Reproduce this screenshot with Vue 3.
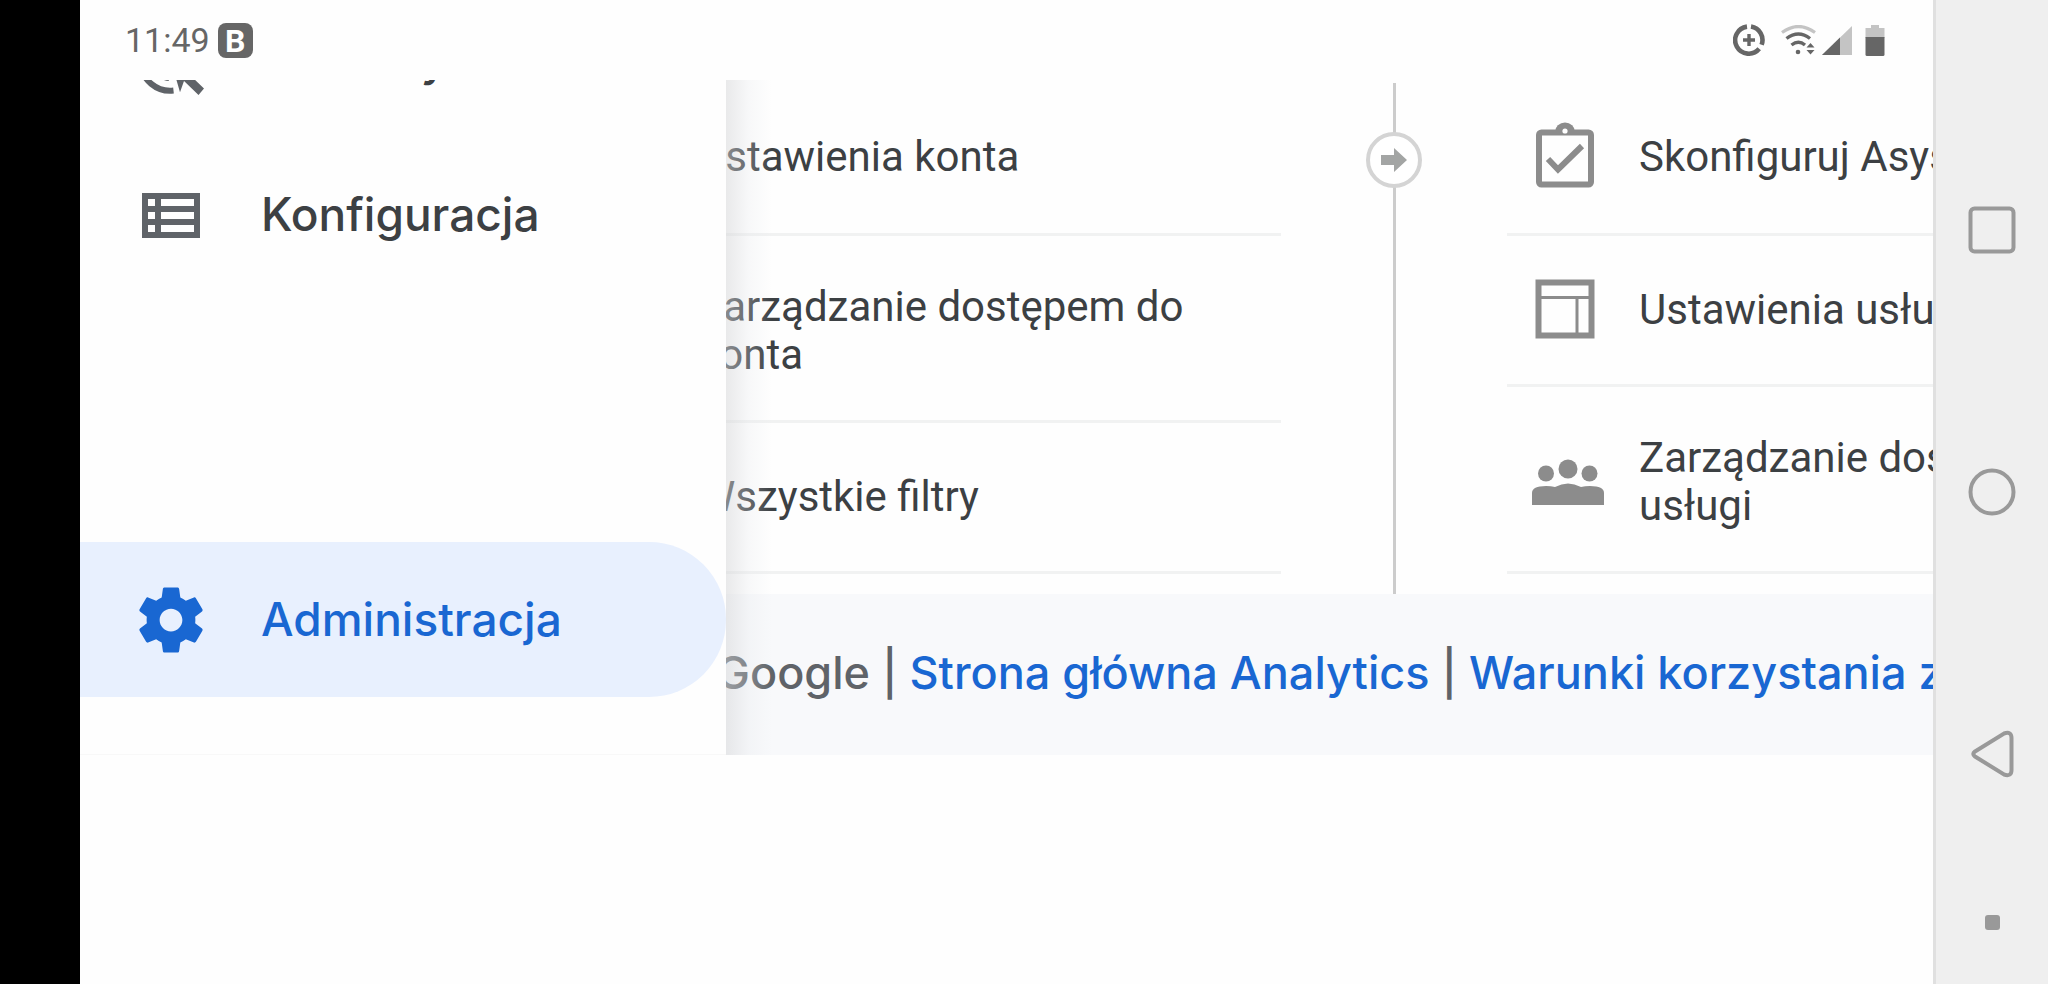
<script setup>
const drawerItems = [
  { id: 'ads', label: 'Reklamy' },
  { id: 'config', label: 'Konfiguracja' },
  { id: 'admin', label: 'Administracja', active: true }
];

const accountItems = [
  { id: 'account', label: 'Ustawienia konta' },
  { id: 'access', label: 'Zarządzanie dostępem do konta', tall: true },
  { id: 'filters', label: 'Wszystkie filtry' }
];

const propertyItems = [
  { id: 'assistant', label: 'Skonfiguruj Asystenta' },
  { id: 'settings', label: 'Ustawienia usługi' },
  { id: 'users', label: 'Zarządzanie dostępem do usługi', tall: true }
];
</script>

<template>
  <div class="device">
    <div class="cutout"></div>

    <div class="screen">
      <header class="status-bar">
        <div class="status-left">
          <span class="time">11:49</span>
          <span class="app-badge">B</span>
        </div>
        <div class="status-right">
          <svg class="saver" width="32" height="32" viewBox="0 0 32 32">
            <path d="M18 2.6A13.6 13.6 0 0 1 28.6 20.8M26.2 24.8A13.6 13.6 0 1 1 14 2.6" fill="none" stroke="#666" stroke-width="4.6" />
            <path d="M16 10v12M10 16h12" stroke="#666" stroke-width="3.4" />
          </svg>
          <svg class="wifi" width="35" height="30" viewBox="0 0 35 30">
            <path d="M1 7.5Q17.5-4.5 34 7.5" fill="none" stroke="#c4c4c4" stroke-width="3.2" />
            <path d="M5.5 13.5Q17.5 4.5 29 13.5M10.5 20Q17.5 14.5 24 20" fill="none" stroke="#666" stroke-width="3.4" />
            <circle cx="17" cy="27" r="2.3" fill="#666" />
            <path d="M25.5 22.5l4-4.5 4 4.5zM25.5 25h8l-4 4.5z" fill="#666" />
          </svg>
          <svg class="signal" width="30" height="29" viewBox="0 0 30 29">
            <path d="M30 0v29H0z" fill="#c4c4c4" />
            <path d="M18 11.5V29H0z" fill="#666" />
          </svg>
          <svg class="battery" width="20" height="31" viewBox="0 0 20 31">
            <path d="M6 0h8v3h5.5v10H.5V3H6z" fill="#c4c4c4" />
            <path d="M.5 12h19v17.5q0 1.5-1.5 1.5H2q-1.5 0-1.5-1.5z" fill="#666" />
          </svg>
        </div>
      </header>

      <main class="page">
        <div class="columns">
          <ul class="list account-list">
            <li v-for="item in accountItems" :key="item.id" class="item" :class="{ tall: item.tall }">
              <span class="label">{{ item.label }}</span>
            </li>
          </ul>

          <div class="divider">
            <button class="move-btn" aria-label="Przenieś">
              <svg width="28" height="26" viewBox="0 0 28 26">
                <path d="M1 8h13V1l13 12-13 12v-7H1z" fill="#a3a5a4" />
              </svg>
            </button>
          </div>

          <ul class="list property-list">
            <li v-for="item in propertyItems" :key="item.id" class="item" :class="{ tall: item.tall }">
              <svg v-if="item.id === 'assistant'" class="item-icon" width="80" height="80" viewBox="0 -2 80 80">
                <rect x="13" y="13.5" width="52" height="52" rx="2.5" fill="none" stroke="#8c8c8c" stroke-width="6" />
                <path d="M29 13a10 9.5 0 0 1 20 0z" fill="#8c8c8c" />
                <circle cx="39" cy="12" r="2.6" fill="#fff" />
                <path d="M22 40l10 10.5L56 27" fill="none" stroke="#8c8c8c" stroke-width="6" />
              </svg>
              <svg v-else-if="item.id === 'settings'" class="item-icon" width="80" height="80" viewBox="0 -2 80 80">
                <path d="M12.5 10.5h53v53h-53z" fill="none" stroke="#8c8c8c" stroke-width="6" />
                <path d="M15 25.5h48M51 25.5V61" fill="none" stroke="#8c8c8c" stroke-width="3" />
              </svg>
              <svg v-else class="item-icon" width="80" height="80" viewBox="0 -2 80 80">
                <circle cx="42" cy="25" r="9.5" fill="#8c8c8c" />
                <circle cx="20" cy="29.5" r="8" fill="#8c8c8c" />
                <circle cx="63.5" cy="29.5" r="8" fill="#8c8c8c" />
                <path d="M6 61V49q0-7 14-7 5 0 9 1 13-7 26 0 4-1 9-1 14 0 14 7v12z" fill="#8c8c8c" />
              </svg>
              <span class="label">{{ item.label }}</span>
            </li>
          </ul>
        </div>

        <footer class="footer">
          <span>© 2021 Google</span> | <a href="#">Strona główna Analytics</a> | <a href="#">Warunki korzystania z usługi</a>
        </footer>

        <nav class="drawer">
          <a v-for="item in drawerItems" :key="item.id" href="#" class="drawer-item" :class="{ active: item.active }">
            <svg v-if="item.id === 'ads'" class="drawer-icon" width="78" height="78" viewBox="0 0 78 78">
              <path d="M41.5 69.6A29.7 29.7 0 1 1 68 40M37 57A17 17 0 1 1 55.5 40" fill="none" stroke="#5f6368" stroke-width="6" />
              <path d="M39 40l30 10-9 6 12 11.5-5.5 6.5L52 60l-4 11.3z" fill="#5f6368" />
            </svg>
            <svg v-else-if="item.id === 'config'" class="drawer-icon" width="78" height="78" viewBox="0 0 78 78">
              <path fill-rule="evenodd" d="M10 17h58v45H10zM16 23v7h7v-7zM29 23v7h33v-7zM16 36v7h7v-7zM29 36v7h33v-7zM16 49v7h7v-7zM29 49v7h33v-7z" fill="#5f6368" />
            </svg>
            <svg v-else class="drawer-icon" width="78" height="78" viewBox="0 0 24 24">
              <path d="M19.43 12.98c.04-.32.07-.64.07-.98s-.03-.66-.07-.98l2.11-1.65c.19-.15.24-.42.12-.64l-2-3.46c-.12-.22-.39-.3-.61-.22l-2.49 1c-.52-.4-1.08-.73-1.69-.98l-.38-2.65C14.46 2.18 14.25 2 14 2h-4c-.25 0-.46.18-.49.42l-.38 2.65c-.61.25-1.17.59-1.69.98l-2.49-1c-.23-.09-.49 0-.61.22l-2 3.46c-.13.22-.07.49.12.64l2.11 1.65c-.04.32-.07.65-.07.98s.03.66.07.98l-2.11 1.65c-.19.15-.24.42-.12.64l2 3.46c.12.22.39.3.61.22l2.49-1c.52.4 1.08.73 1.69.98l.38 2.65c.03.24.24.42.49.42h4c.25 0 .46-.18.49-.42l.38-2.65c.61-.25 1.17-.59 1.69-.98l2.49 1c.23.09.49 0 .61-.22l2-3.46c.12-.22.07-.49-.12-.64l-2.11-1.65zM12 15.5c-1.93 0-3.5-1.57-3.5-3.5s1.57-3.5 3.5-3.5 3.5 1.57 3.5 3.5-1.57 3.5-3.5 3.5z" fill="#1967d2" />
            </svg>
            <span class="drawer-label">{{ item.label }}</span>
          </a>
        </nav>
      </main>
    </div>

    <nav class="system-nav">
      <button aria-label="Ostatnie aplikacje">
        <svg width="48" height="48" viewBox="0 0 48 48">
          <rect x="2.5" y="2.5" width="43" height="43" rx="4" fill="none" stroke="#999" stroke-width="4" />
        </svg>
      </button>
      <button aria-label="Ekran główny">
        <svg width="48" height="48" viewBox="0 0 48 48">
          <circle cx="24" cy="24" r="21.5" fill="none" stroke="#999" stroke-width="4" />
        </svg>
      </button>
      <button aria-label="Wstecz">
        <svg width="48" height="48" viewBox="0 0 48 48">
          <path d="M7 21.5L36 3.5Q43.5 1 43.5 8v32q0 7-7.5 4.5L7 26.5Q3.5 24 7 21.5z" fill="none" stroke="#999" stroke-width="4" />
        </svg>
      </button>
      <button class="hide-btn" aria-label="Ukryj pasek">
        <svg width="15" height="15" viewBox="0 0 15 15">
          <rect width="15" height="15" rx="3" fill="#999" />
        </svg>
      </button>
    </nav>
  </div>
</template>

<style>
body { background: #fefefe; }
</style>

<style scoped>
.device { display: flex; min-height: 100vh; font-family: Roboto, "Liberation Sans", sans-serif; color: #3c4043; background: #fefefe; }
.cutout { flex: 0 0 80px; background: #000; }
.screen { flex: 1; min-width: 0; }
button { display: flex; align-items: center; justify-content: center; padding: 0; border: none; background: none; cursor: pointer; }
svg { display: block; flex-shrink: 0; }

.status-bar { display: flex; justify-content: space-between; align-items: center; height: 80px; padding: 0 48px 0 45px; box-sizing: border-box; }
.status-left, .status-right { display: flex; align-items: center; }
.status-left { gap: 8px; }
.time { font-size: 34px; line-height: 40px; color: #666; }
.app-badge { width: 35px; height: 35px; border-radius: 8px; background: #666; color: #fff; font-size: 32px; font-weight: 700; line-height: 36px; text-align: center; }
.wifi { margin-left: 16px; }
.signal { margin-left: 6px; }
.battery { margin-left: 13px; }

.page { position: relative; overflow: hidden; }
.columns { display: flex; }
.list { list-style: none; margin: 0; padding: 0 0 20px; }
.account-list { flex: 1; min-width: 0; }
.account-list .item { padding-left: 618px; }
.property-list { flex: 0 0 426px; min-width: 0; }
.property-list .item { width: 714px; }
.item { display: flex; align-items: center; min-height: 151px; box-sizing: border-box; border-bottom: 3px solid #f1f2f2; }
.item:first-child { min-height: 156px; }
.item.tall { min-height: 187px; padding-top: 5px; }
.item-icon { margin: 0 33px 0 19px; }
.label { width: 590px; font-size: 42px; line-height: 48px; }
.divider { flex: 0 0 226px; display: flex; justify-content: center; padding-top: 52px; box-sizing: border-box; background: linear-gradient(#ccc, #ccc) 50% 3px / 3px 100% no-repeat; }
.move-btn { width: 56px; height: 56px; border: 4px solid #d4d4d4; border-radius: 50%; background: #fff; }

.footer { height: 161px; padding-left: 468px; box-sizing: border-box; background: #f8f9fb; color: #5f6368; font: 500 45px/158px Inter, "Open Sans", sans-serif; white-space: nowrap; }
.footer a { color: #1967d2; text-decoration: none; }

.drawer { position: absolute; inset: 0 auto 0 0; width: 646px; display: flex; flex-direction: column; justify-content: flex-end; padding-bottom: 57px; box-sizing: border-box; background: #fefefe; border-bottom: 1px solid #f8f8f8; }
/* soft edge the drawer casts over the page */
.drawer::after { content: ""; position: absolute; inset: 0 -46px -1px auto; width: 46px; background: linear-gradient(to right, rgba(212, 213, 215, 0.5), rgba(228, 230, 234, 0.25) 50%, rgba(240, 243, 248, 0)); }
.drawer-item { display: flex; flex-shrink: 0; align-items: center; height: 155px; color: #3c4043; text-decoration: none; font: 500 46px/56px Inter, "Open Sans", sans-serif; }
.drawer-item.active { margin-top: 250px; border-radius: 0 77px 77px 0; background: #e8f0fe; color: #1967d2; }
.drawer-icon { margin: 0 51px 0 52px; }
.drawer-label { padding-bottom: 2px; }

.system-nav { flex: 0 0 115px; display: flex; flex-direction: column; align-items: center; box-sizing: border-box; padding-top: 206px; gap: 214px; border-left: 3px solid #e0e0e0; background: #efefef; }
.hide-btn { margin-top: -77px; }
</style>
